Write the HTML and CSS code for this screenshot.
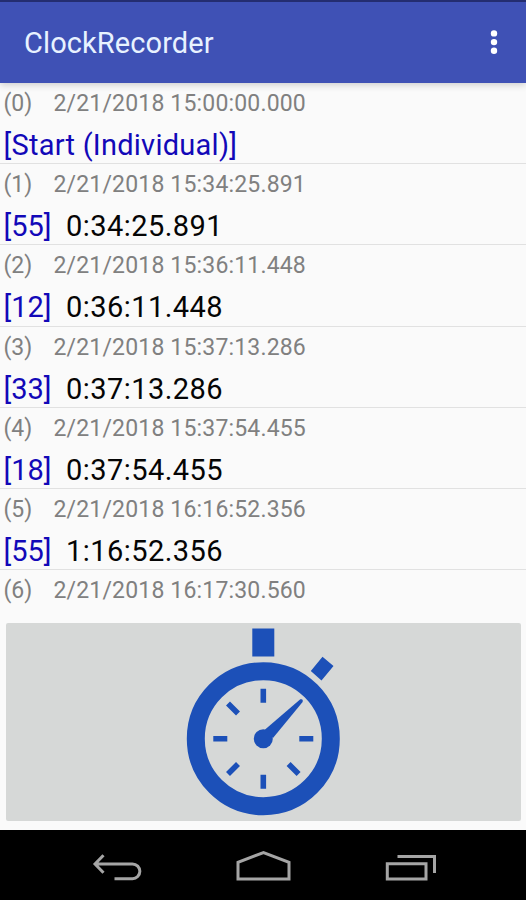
FILE: index.html
```html
<!DOCTYPE html>
<html lang="en">
<head>
<meta charset="utf-8">
<title>ClockRecorder</title>
<link rel="stylesheet" href="styles.css">
</head>
<body>
<header class="appbar">
  <h1 class="title">ClockRecorder</h1>
  <svg class="more" width="8" height="26" viewBox="0 0 8 26"><circle cx="4" cy="3.400" r="3.2"/><circle cx="4" cy="12.100" r="3.2"/><circle cx="4" cy="20.800" r="3.2"/></svg>
</header>
<main class="records">
  <div class="record"><div class="stamp"><span class="index">(0)</span><span class="date">2/21/2018 15:00:00.000</span></div><div class="lap"><span class="tag start">[Start (Individual)]</span></div></div>
  <div class="record"><div class="stamp"><span class="index">(1)</span><span class="date">2/21/2018 15:34:25.891</span></div><div class="lap"><span class="tag">[55]</span><span class="time">0:34:25.891</span></div></div>
  <div class="record"><div class="stamp"><span class="index">(2)</span><span class="date">2/21/2018 15:36:11.448</span></div><div class="lap"><span class="tag">[12]</span><span class="time">0:36:11.448</span></div></div>
  <div class="record"><div class="stamp"><span class="index">(3)</span><span class="date">2/21/2018 15:37:13.286</span></div><div class="lap"><span class="tag">[33]</span><span class="time">0:37:13.286</span></div></div>
  <div class="record"><div class="stamp"><span class="index">(4)</span><span class="date">2/21/2018 15:37:54.455</span></div><div class="lap"><span class="tag">[18]</span><span class="time">0:37:54.455</span></div></div>
  <div class="record"><div class="stamp"><span class="index">(5)</span><span class="date">2/21/2018 16:16:52.356</span></div><div class="lap"><span class="tag">[55]</span><span class="time">1:16:52.356</span></div></div>
  <div class="record"><div class="stamp"><span class="index">(6)</span><span class="date">2/21/2018 16:17:30.560</span></div></div>
</main>
<section class="panel">
  <button class="capture" aria-label="Record time">
    <svg width="160" height="198" viewBox="183 623 160 198">
      <g fill="none" stroke="#1c50b8">
        <circle cx="263.3" cy="738.7" r="67.5" stroke-width="18"/>
        <g stroke-width="5.6">
          <path d="M263.3 688.7v14M263.3 774.7v14M213.3 738.7h14M299.3 738.7h14"/>
          <path d="M228 703.4l10 10M228 774l10-10M298.600 774l-10-10"/>
        </g>
      </g>
      <g fill="#1c50b8">
        <path d="M252.300 628.500h22v28h-22zM322.500 656.800l11 9.300-12 14.300-10.700-9.300z"/>
        <circle cx="263.300" cy="738.700" r="9.500"/>
        <path d="M264.500 730L300.300 699.300q3.200-.8 2.300 2.600L273 738z"/>
      </g>
    </svg>
  </button>
</section>
<nav class="navbar">
  <svg width="526" height="70" viewBox="0 830 526 70" fill="none" stroke="#a5a5a5" stroke-width="3">
    <path d="M103.500 855.200L95 864l8.500 8.800M95 864h37.500a7.300 7.300 0 0 1 0 14.700H114.500"/>
    <path d="M238 879V862.300L263.500 852.500 289 862.300V879z"/>
    <path d="M387.300 863.800H426V879H387.300zM397.500 856.500H434.500V873"/>
  </svg>
</nav>
</body>
</html>
```
FILE: styles.css
```css
* { box-sizing: border-box; }
body {
  margin: 0;
  width: 526px;
  height: 900px;
  display: flex;
  flex-direction: column;
  overflow: hidden;
  background: #fafafa;
  font-family: Roboto, sans-serif;
}
.appbar {
  height: 83px;
  flex: none;
  display: flex;
  align-items: center;
  justify-content: space-between;
  padding: 3px 28px 0 24px;
  background: linear-gradient(#242d70 2px, #3f51b5 2px);
  position: relative;
  box-shadow: 0 2px 7px rgba(0, 0, 0, .18);
}
.title {
  margin: 0;
  font-size: 29px;
  line-height: 34px;
  font-weight: 400;
  letter-spacing: .1px;
  color: #e8f2ff;
}
.more { fill: #fff; display: block; }
.records {
  height: 533px;
  flex: none;
  overflow: hidden;
}
.record {
  height: 81.2px;
  padding: 7px 0 0 3.5px;
  border-bottom: 1px solid #e1e1e1;
}
.record:last-child { border: 0; }
.stamp {
  display: flex;
  height: 28px;
  line-height: 28px;
  font-size: 23px;
  color: #808080;
}
.index { width: 50px; }
.date { letter-spacing: .17px; }
.lap {
  display: flex;
  height: 44px;
  line-height: 54px;
  font-size: 29px;
  color: #050505;
}
.tag { width: 62.5px; color: #1208b8; white-space: nowrap; }
.tag.start { letter-spacing: .25px; }
.time { letter-spacing: .45px; }
.panel { padding: 7px 5px 9px 6px; }
.capture {
  display: flex;
  justify-content: center;
  width: 515px;
  height: 198px;
  padding: 0 1px 0 0;
  border: 0;
  border-radius: 2px;
  background: #d6d8d7;
}
.navbar { height: 70px; flex: none; background: #000; }
.navbar svg { display: block; }
```
